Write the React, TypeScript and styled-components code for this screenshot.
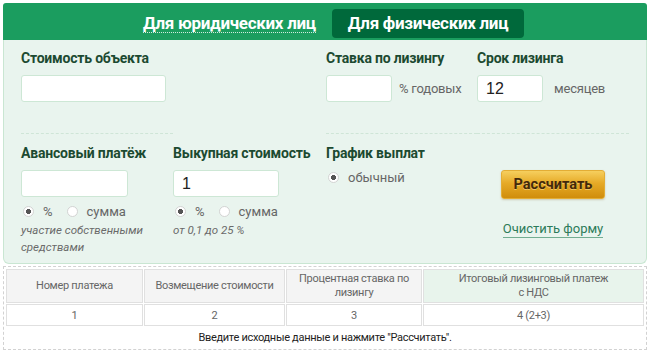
import styled, { createGlobalStyle } from "styled-components";

const GlobalStyle = createGlobalStyle`
  body {
    margin: 0;
    background: #fff;
    font-family: Roboto, "Liberation Sans", sans-serif;
  }
`;

const Wrapper = styled.div`
  width: 644px;
  margin: 3px 3px 0;
`;

const TabBar = styled.div`
  height: 37px;
  background: #1b9d5f;
  border-radius: 3px 3px 0 0;
  display: flex;
  align-items: center;
  padding-left: 140px;
  gap: 16px;
`;

const Tab = styled.span<{ $active?: boolean }>`
  font-size: 17px;
  font-weight: 700;
  color: #fff;
  letter-spacing: -0.3px;
  ${(p) =>
    p.$active
      ? `
    background: #00693b;
    border-radius: 4px;
    padding: 4px 16px 5px;
    margin-top: 7px;
    margin-bottom: 3px;
  `
      : `
    border-bottom: 1px dotted rgba(255,255,255,0.8);
    line-height: 18px;
    margin-top: 4px;
  `}
`;

const Panel = styled.div`
  background: #e9f4ee;
  border: 1px solid #c9e6d2;
  border-top: none;
  border-radius: 0 0 6px 6px;
  padding: 0 17px;
  height: 223px;
`;

const Grid = styled.div`
  display: grid;
  grid-template-columns: 152px 153px 151px 1fr;
`;

const Cell = styled.div<{ $line?: boolean }>`
  padding: ${(p) => (p.$line ? "9px" : "10px")} 0 0;
  height: ${(p) => (p.$line ? "94px" : "auto")};
  border-bottom: ${(p) => (p.$line ? "1px dashed #cfe5d7" : "none")};
  box-sizing: border-box;
`;

const Label = styled.div`
  font-size: 14px;
  font-weight: 700;
  color: #1c4a31;
  letter-spacing: -0.2px;
  line-height: 18px;
  margin-bottom: 8px;
  white-space: nowrap;
`;

const Field = styled.div`
  display: flex;
  align-items: center;
`;

const Input = styled.input<{ $w: number }>`
  width: ${(p) => p.$w}px;
  height: 27px;
  box-sizing: border-box;
  border: 1px solid #cde7d5;
  border-radius: 3px;
  background: #fff;
  padding: 0 8px;
  font-family: "Liberation Sans", Arial, sans-serif;
  font-size: 16px;
  color: #222;
  outline: none;
`;

const Unit = styled.span<{ $gap: number }>`
  margin-left: ${(p) => p.$gap}px;
  font-size: 13px;
  letter-spacing: -0.2px;
  color: #666;
  white-space: nowrap;
`;

const Radios = styled.div`
  display: flex;
  align-items: center;
  gap: 12px;
  margin-top: 6px;
  height: 16px;
`;

const RadioItem = styled.label`
  display: flex;
  align-items: center;
  gap: 9px;
  font-size: 13px;
  color: #666;
`;

const RadioDot = styled.span<{ $on?: boolean }>`
  width: 11px;
  height: 11px;
  box-sizing: border-box;
  border-radius: 50%;
  border: 1px solid #d4d4d4;
  background: radial-gradient(
    circle,
    ${(p) => (p.$on ? "#555 0 2.3px, #fff 2.8px" : "#fff 0")}
  );
  margin-left: 2px;
`;

const Note = styled.div`
  margin-top: 3px;
  font-size: 11.5px;
  font-style: italic;
  line-height: 17px;
  color: #6a6a6a;
  width: 130px;
`;

const Actions = styled.div`
  display: flex;
  flex-direction: column;
  align-items: center;
  width: 104px;
  margin: 26px 0 0 24px;
`;

const CalcButton = styled.button`
  width: 104px;
  height: 29px;
  border: 1px solid #e3ad35;
  border-radius: 3px;
  background: linear-gradient(#f6cf5e 0%, #e6aa27 45%, #d08d0c 100%);
  box-shadow: 0 1px 2px rgba(120, 80, 0, 0.25);
  font-family: Roboto, sans-serif;
  font-size: 14.5px;
  font-weight: 700;
  color: #43290a;
  text-shadow: 0 1px 0 rgba(255, 235, 170, 0.5);
  padding: 0;
`;

const ClearLink = styled.a`
  margin-top: 22px;
  font-size: 13px;
  color: #2c7b59;
  border-bottom: 1px solid #72ad91;
  line-height: 16px;
  text-decoration: none;
  white-space: nowrap;
`;

const TableBox = styled.div`
  margin-top: 2px;
  border: 1px dashed #d2d2d2;
  padding: 1px;
`;

const Table = styled.table`
  width: 100%;
  border-collapse: separate;
  border-spacing: 1px;
  font-size: 11px;
  letter-spacing: -0.3px;
  color: #666;
  text-align: center;
`;

const Th = styled.th<{ $hl?: boolean; $w?: number }>`
  font-weight: 400;
  height: 32px;
  line-height: 14px;
  background: ${(p) => (p.$hl ? "#e8f4ec" : "#f4f4f4")};
  border: 1px solid #e0e0e0;
  width: ${(p) => (p.$w ? `${p.$w}px` : "auto")};
  padding: 0 4px;
`;

const Td = styled.td`
  height: 20px;
  border: 1px solid #e0e0e0;
  background: #fff;
  padding: 0;
`;

const Message = styled.td`
  height: 20px;
  color: #222;
  padding: 0;
`;

export default function App() {
  return (
    <Wrapper>
      <GlobalStyle />
      <TabBar>
        <Tab>Для юридических лиц</Tab>
        <Tab $active>Для физических лиц</Tab>
      </TabBar>
      <Panel>
        <Grid>
          <Cell $line>
            <Label>Стоимость объекта</Label>
            <Input $w={145} />
          </Cell>
          <Cell />
          <Cell $line>
            <Label>Ставка по лизингу</Label>
            <Field>
              <Input $w={66} />
              <Unit $gap={7}>% годовых</Unit>
            </Field>
          </Cell>
          <Cell $line>
            <Label>Срок лизинга</Label>
            <Field>
              <Input $w={66} defaultValue="12" />
              <Unit $gap={11}>месяцев</Unit>
            </Field>
          </Cell>

          <Cell>
            <Label>Авансовый платёж</Label>
            <Input $w={107} />
            <Radios>
              <RadioItem>
                <RadioDot $on />%
              </RadioItem>
              <RadioItem>
                <RadioDot />
                сумма
              </RadioItem>
            </Radios>
            <Note>участие собственными средствами</Note>
          </Cell>
          <Cell>
            <Label>Выкупная стоимость</Label>
            <Input $w={106} defaultValue="1" />
            <Radios>
              <RadioItem>
                <RadioDot $on />%
              </RadioItem>
              <RadioItem>
                <RadioDot />
                сумма
              </RadioItem>
            </Radios>
            <Note>от 0,1 до 25 %</Note>
          </Cell>
          <Cell>
            <Label>График выплат</Label>
            <RadioItem>
              <RadioDot $on />
              обычный
            </RadioItem>
          </Cell>
          <Cell>
            <Actions>
              <CalcButton>Рассчитать</CalcButton>
              <ClearLink href="#">Очистить форму</ClearLink>
            </Actions>
          </Cell>
        </Grid>
      </Panel>
      <TableBox>
        <Table>
          <thead>
            <tr>
              <Th $w={127}>Номер платежа</Th>
              <Th $w={131}>Возмещение стоимости</Th>
              <Th $w={126}>
                Процентная ставка по
                <br />
                лизингу
              </Th>
              <Th $hl>
                Итоговый лизинговый платеж
                <br />с НДС
              </Th>
            </tr>
          </thead>
          <tbody>
            <tr>
              <Td>1</Td>
              <Td>2</Td>
              <Td>3</Td>
              <Td>4 (2+3)</Td>
            </tr>
            <tr>
              <Message colSpan={4}>
                Введите исходные данные и нажмите "Рассчитать".
              </Message>
            </tr>
          </tbody>
        </Table>
      </TableBox>
    </Wrapper>
  );
}
